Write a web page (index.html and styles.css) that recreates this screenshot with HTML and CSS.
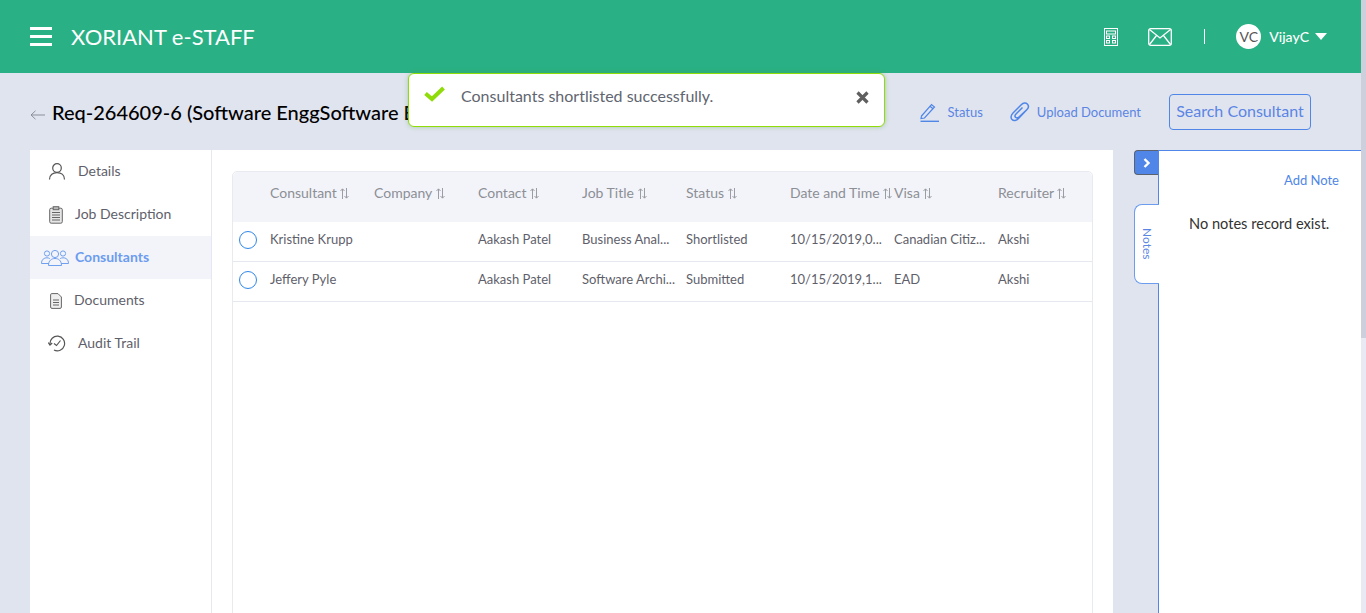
FILE: index.html
```html
<!DOCTYPE html>
<html lang="en">
<head>
  <meta charset="UTF-8">
  <title>XORIANT e-STAFF</title>
  <link rel="stylesheet" href="styles.css">
</head>
<body>
  <svg class="defs" width="0" height="0">
    <symbol id="sort" viewBox="0 0 9 11">
      <path d="M2.5 11 V1 M0.5 3 L2.5 0.8 L4.5 3 M6.5 0 V10 M4.5 8 L6.5 10.2 L8.5 8" fill="none" stroke="#9a9da3" stroke-width="1"/>
    </symbol>
  </svg>

  <header class="topbar">
    <div class="brand">
      <div class="burger"><span></span><span></span><span></span></div>
      <div class="brand-name">XORIANT e-STAFF</div>
    </div>
    <div class="top-right">
      <svg class="ic-calc" width="14" height="18" viewBox="0 0 14 18" fill="none" stroke="#fff" stroke-width="1">
        <rect x="0.5" y="0.5" width="13" height="17"/>
        <rect x="2.5" y="3" width="9" height="3"/>
        <rect x="2.5" y="8" width="3" height="2.5"/>
        <rect x="8.5" y="8" width="3" height="2.5"/>
        <rect x="2.5" y="12.5" width="3" height="2.5"/>
        <rect x="8.5" y="12.5" width="3" height="2.5"/>
      </svg>
      <svg class="ic-mail" width="24" height="18" viewBox="0 0 24 18" fill="none" stroke="#fff" stroke-width="1.3">
        <rect x="0.7" y="0.7" width="22.6" height="16.6" rx="2"/>
        <path d="M1.5 1.5 L12 10 L22.5 1.5 M1.5 16.5 L8.5 7.5 M22.5 16.5 L15.5 7.5"/>
      </svg>
      <div class="sep"></div>
      <div class="avatar">VC</div>
      <div class="user-name">VijayC</div>
      <div class="caret"></div>
    </div>
  </header>

  <div class="toast">
    <svg class="toast-check" width="21" height="16" viewBox="0 0 21 16" fill="none" stroke="#8fdc0a" stroke-width="4">
      <path d="M1.5 7.5 L8 13 L19.5 2"/>
    </svg>
    <div class="toast-text">Consultants shortlisted successfully.</div>
    <svg class="toast-close" width="13" height="13" viewBox="0 0 13 13" fill="none" stroke="#5f5f5f" stroke-width="3.2">
      <path d="M1.5 1.5 L11.5 11.5 M11.5 1.5 L1.5 11.5"/>
    </svg>
  </div>

  <div class="title-row">
    <div class="title-left">
      <svg class="back" width="15" height="10" viewBox="0 0 15 10" fill="none" stroke="#8a8f99" stroke-width="1">
        <path d="M15 5 H1 M5.5 0.8 L1 5 L5.5 9.2"/>
      </svg>
      <h1 class="req-title">Req-264609-6 (Software EnggSoftware Engg)</h1>
    </div>
    <div class="actions">
      <a class="action action-status">
        <svg width="20" height="20" viewBox="0 0 20 20" fill="none" stroke="#4f86e7" stroke-width="1.2">
          <path d="M1.5 14 L11.5 2.5 L14.5 5 L4.5 16 L1 16.5 Z M10 4.2 L13 6.8"/>
          <path d="M0.5 19.3 H19" stroke-width="1.4"/>
        </svg>
        Status
      </a>
      <a class="action action-upload">
        <svg width="20" height="20" viewBox="0 0 20 20" fill="none" stroke="#4f86e7" stroke-width="1.5">
          <path d="M17 7.5 L8.5 16.5 C6.5 18.8 3.5 19 2 17.5 C0.5 16 0.8 13.2 3 11 L11.5 2.5 C13.2 0.8 15.8 0.5 17.3 2 C18.8 3.5 18.6 5.8 17 7.5 L9 15 C8 16 6.3 16.2 5.5 15.3 C4.7 14.4 5 13 6 12 L12.5 5.5"/>
        </svg>
        Upload Document
      </a>
      <button class="search-btn">Search Consultant</button>
    </div>
  </div>

  <div class="content">
    <nav class="side">
      <a class="side-item side-details">
        <svg width="18" height="17" viewBox="0 0 18 17" fill="none" stroke="#555" stroke-width="1.2">
          <circle cx="9" cy="5" r="4.3"/>
          <path d="M1.5 16.5 C1.5 11.8 5 9.6 9 9.6 C13 9.6 16.5 11.8 16.5 16.5"/>
        </svg>
        Details
      </a>
      <a class="side-item side-job">
        <svg width="14" height="18" viewBox="0 0 14 18" fill="none" stroke="#666" stroke-width="1">
          <rect x="0.7" y="2.2" width="12.6" height="15" rx="1.5" fill="#e6e6e6"/>
          <rect x="4.2" y="0.7" width="5.6" height="3" fill="#bbb"/>
          <path d="M3 6.5 H11 M3 9 H11 M3 11.5 H11 M3 14 H11"/>
        </svg>
        Job Description
      </a>
      <a class="side-item side-cons active">
        <svg width="28" height="17" viewBox="0 0 28 17" fill="none" stroke="#6fa0ef" stroke-width="1">
          <circle cx="14" cy="5" r="3.6"/>
          <path d="M7.5 16.5 C7.5 11.5 10.5 9.5 14 9.5 C17.5 9.5 20.5 11.5 20.5 16.5 Z"/>
          <circle cx="6" cy="4.5" r="2.6"/>
          <path d="M0.5 14.5 C0.5 10.5 3 8.8 6 8.8 C7 8.8 8 9 8.8 9.6 M8 14.5 H0.5"/>
          <circle cx="22" cy="4.5" r="2.6"/>
          <path d="M27.5 14.5 C27.5 10.5 25 8.8 22 8.8 C21 8.8 20 9 19.2 9.6 M20 14.5 H27.5"/>
        </svg>
        Consultants
      </a>
      <a class="side-item side-docs">
        <svg width="12" height="16" viewBox="0 0 12 16" fill="none" stroke="#666" stroke-width="1">
          <path d="M1.8 0.6 H8 L11.4 4 V14 Q11.4 15.4 10 15.4 H2 Q0.6 15.4 0.6 14 V1.8 Q0.6 0.6 1.8 0.6 Z" fill="#efefef"/>
          <path d="M3 7 H9 M3 9.5 H9 M3 12 H9"/>
        </svg>
        Documents
      </a>
      <a class="side-item side-audit">
        <svg width="18" height="17" viewBox="0 0 18 17" fill="none" stroke="#555" stroke-width="1.2">
          <path d="M2 9 A7.3 7.3 0 1 1 6 15"/>
          <path d="M0.3 7.5 L2 10 L4.2 8"/>
          <path d="M6 8.5 L8.5 10.5 L12.5 5.5"/>
        </svg>
        Audit Trail
      </a>
    </nav>

    <main class="main">
      <div class="table">
        <div class="row head">
          <div class="cell c-sel"></div>
          <div class="cell">Consultant <svg class="sort"><use href="#sort"/></svg></div>
          <div class="cell">Company <svg class="sort"><use href="#sort"/></svg></div>
          <div class="cell">Contact <svg class="sort"><use href="#sort"/></svg></div>
          <div class="cell">Job Title <svg class="sort"><use href="#sort"/></svg></div>
          <div class="cell">Status <svg class="sort"><use href="#sort"/></svg></div>
          <div class="cell">Date and Time <svg class="sort"><use href="#sort"/></svg></div>
          <div class="cell">Visa <svg class="sort"><use href="#sort"/></svg></div>
          <div class="cell">Recruiter <svg class="sort"><use href="#sort"/></svg></div>
        </div>
        <div class="row">
          <div class="cell c-sel"><span class="radio"></span></div>
          <div class="cell">Kristine Krupp</div>
          <div class="cell"></div>
          <div class="cell">Aakash Patel</div>
          <div class="cell">Business Anal...</div>
          <div class="cell">Shortlisted</div>
          <div class="cell">10/15/2019,0...</div>
          <div class="cell">Canadian Citiz...</div>
          <div class="cell">Akshi</div>
        </div>
        <div class="row">
          <div class="cell c-sel"><span class="radio"></span></div>
          <div class="cell">Jeffery Pyle</div>
          <div class="cell"></div>
          <div class="cell">Aakash Patel</div>
          <div class="cell">Software Archi...</div>
          <div class="cell">Submitted</div>
          <div class="cell">10/15/2019,1...</div>
          <div class="cell">EAD</div>
          <div class="cell">Akshi</div>
        </div>
      </div>
    </main>

    <aside class="notes-wrap">
      <div class="notes-tabs">
        <div class="collapse">
          <svg width="8" height="10" viewBox="0 0 8 10" fill="none" stroke="#fff" stroke-width="2.4">
            <path d="M1.5 1 L5.5 5 L1.5 9"/>
          </svg>
        </div>
        <div class="notes-tab"><span>Notes</span></div>
      </div>
      <div class="notes">
        <a class="add-note">Add Note</a>
        <p class="no-notes">No notes record exist.</p>
      </div>
    </aside>
  </div>

  <div class="scrollbar"><div class="scroll-thumb"></div></div>
</body>
</html>
```

FILE: styles.css
```css
body {
  margin: 0;
  background: #e0e4ef;
  font-family: Lato, "Liberation Sans", sans-serif;
  color: #555;
}
.defs {
  display: block;
}
.scrollbar {
  position: fixed;
  top: 0;
  right: 0;
  bottom: 0;
  width: 5px;
  background: #e8e9f2;
}
.scroll-thumb {
  height: 338px;
  background: #cdcfdd;
}
.topbar {
  height: 73px;
  background: #2ab085;
  display: flex;
  justify-content: space-between;
  align-items: center;
  padding: 0 39px 0 30px;
}
.brand {
  display: flex;
  align-items: center;
  gap: 19px;
}
.burger {
  width: 22px;
  display: flex;
  flex-direction: column;
  gap: 5px;
}
.burger span {
  height: 3px;
  background: #fff;
}
.brand-name {
  color: #fff;
  font-size: 22px;
}
.top-right {
  display: flex;
  align-items: center;
  color: #fff;
}
.ic-mail {
  margin-left: 30px;
}
.sep {
  width: 1px;
  height: 15px;
  background: #fff;
  margin: 0 31px 0 32px;
}
.avatar {
  width: 25px;
  height: 25px;
  border-radius: 50%;
  background: #fff;
  color: #555;
  font-size: 14px;
  line-height: 25px;
  text-align: center;
}
.user-name {
  font-size: 14px;
  font-weight: 500;
  margin-left: 8px;
}
.caret {
  margin-left: 6px;
  border-left: 6.5px solid transparent;
  border-right: 6.5px solid transparent;
  border-top: 7px solid #fff;
}
.toast {
  position: absolute;
  left: 408px;
  top: 73px;
  width: 475px;
  height: 52px;
  background: #fff;
  border: 1px solid #8fdc0a;
  border-radius: 6px;
  box-shadow: 0 0 5px rgba(80, 160, 60, 0.4);
  display: flex;
  align-items: flex-start;
}
.toast-check {
  margin: 12px 0 0 15px;
}
.toast-text {
  font-size: 16px;
  color: #5f6670;
  margin: 12px 0 0 16px;
  flex: 1;
}
.toast-close {
  margin: 17px 15px 0 0;
}
.title-row {
  height: 77px;
  display: flex;
  align-items: center;
  justify-content: space-between;
  padding: 0 55px 0 30px;
}
.title-left {
  display: flex;
  align-items: center;
  gap: 7px;
  width: 860px;
  overflow: hidden;
  white-space: nowrap;
}
.back {
  flex: none;
  margin-top: 6px;
}
.req-title {
  margin: 0;
  font-size: 20px;
  font-weight: 500;
  color: #000;
}
.actions {
  display: flex;
  align-items: center;
  color: #4f86e7;
}
.action {
  display: flex;
  align-items: center;
  gap: 7px;
  font-size: 13px;
  color: #5b85e4;
}
.action-upload {
  margin-left: 27px;
}
.search-btn {
  margin-left: 28px;
  width: 142px;
  height: 36px;
  padding: 0 0 2px;
  background: none;
  border: 1px solid #4f86e7;
  border-radius: 4px;
  color: #5b85e4;
  font-family: Lato, "Liberation Sans", sans-serif;
  font-size: 16px;
}
.content {
  display: flex;
  padding-left: 30px;
  height: 960px;
}
.side {
  width: 181px;
  flex: none;
  background: #fff;
  border-right: 1px solid #e6e8ef;
}
.side-item {
  height: 41px;
  padding-bottom: 2px;
  display: flex;
  align-items: center;
  font-size: 14px;
  color: #5f5f6b;
}
.side-item svg {
  margin-top: 2px;
}
.side-details {
  padding-left: 18px;
  gap: 12px;
}
.side-job {
  padding-left: 19px;
  gap: 12px;
}
.side-cons {
  padding-left: 11px;
  gap: 6px;
}
.side-docs {
  padding-left: 20px;
  gap: 12px;
}
.side-audit {
  padding-left: 18px;
  gap: 12px;
}
.side-item.active {
  background: #f3f4f9;
  color: #6b9cf0;
  font-weight: 700;
}
.main {
  width: 901px;
  flex: none;
  background: #fff;
  padding: 21px 20px 0;
  box-sizing: border-box;
}
.table {
  border: 1px solid #e8eaf0;
  border-radius: 5px;
  height: 100%;
}
.row {
  display: grid;
  grid-template-columns: 37px repeat(5, 104px) 104px 104px 1fr;
  height: 33px;
  padding-bottom: 6px;
  align-items: center;
  font-size: 13px;
  color: #5f5f6b;
  border-bottom: 1px solid #e6e8ef;
  white-space: nowrap;
}
.row.head {
  height: 40px;
  padding-bottom: 10px;
  border-bottom: none;
  background: #f3f4f9;
  color: #8c8f96;
  font-size: 14px;
  border-radius: 5px 5px 0 0;
}
.c-sel {
  display: flex;
  padding-left: 6px;
  margin-top: 2px;
}
.radio {
  width: 16px;
  height: 16px;
  border: 1.5px solid #2f86ea;
  border-radius: 50%;
}
.sort {
  width: 9px;
  height: 11px;
  vertical-align: -1px;
}
.notes-wrap {
  display: flex;
  flex: none;
  margin-left: 21px;
  width: 227px;
}
.notes-tabs {
  width: 24px;
  flex: none;
}
.collapse {
  width: 24px;
  height: 25px;
  box-sizing: border-box;
  background: #4f86e7;
  border: 1px solid #5a6270;
  border-right: none;
  border-radius: 4px 0 0 4px;
  display: flex;
  align-items: center;
  justify-content: center;
}
.notes-tab {
  margin-top: 29px;
  width: 25px;
  height: 80px;
  box-sizing: border-box;
  background: #fff;
  border: 1px solid #6b9cf0;
  border-right: none;
  border-radius: 8px 0 0 8px;
  display: flex;
  align-items: center;
  justify-content: center;
  position: relative;
  z-index: 1;
}
.notes-tab span {
  writing-mode: vertical-rl;
  font-size: 12px;
  color: #5b85e4;
}
.notes {
  flex: 1;
  background: #fff;
  border-left: 1px solid #4f86e7;
  border-top: 1px solid #4f86e7;
}
.add-note {
  display: block;
  text-align: right;
  font-size: 13px;
  color: #4f86e7;
  padding: 21px 22px 0 0;
}
.no-notes {
  margin: 27px 0 0 30px;
  font-size: 14.6px;
  color: #333;
}
```
